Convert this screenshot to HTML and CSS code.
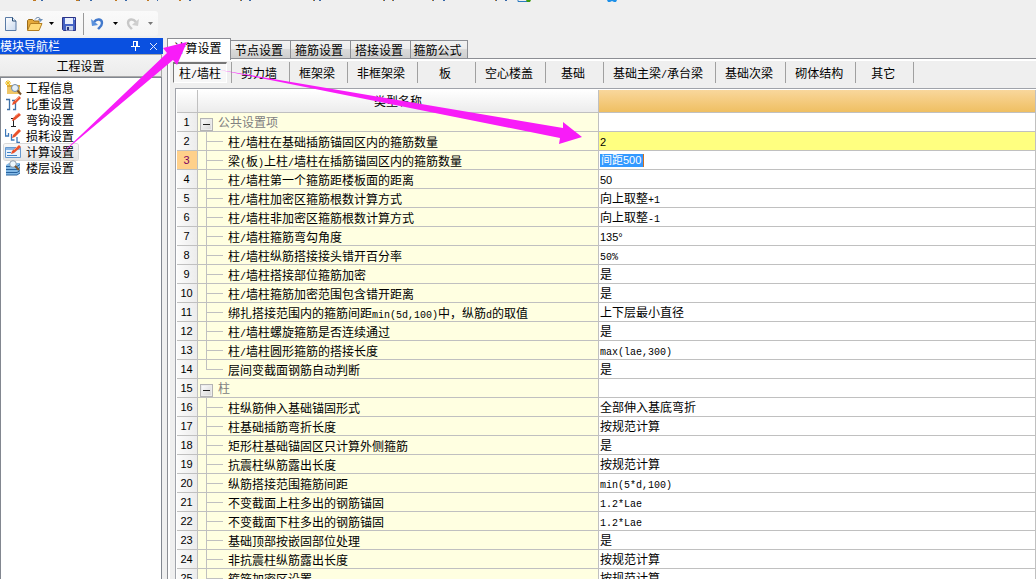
FILE: index.html
```html
<!DOCTYPE html>
<html lang="zh-CN">
<head>
<meta charset="utf-8">
<title>工程设置 - 计算设置</title>
<link rel="stylesheet" href="styles.css">
</head>
<body>
<div class="app">
  <header class="top">
    <svg class="menu-edge" width="640" height="3" aria-hidden="true">
      <path d="M33 0h3M76 0h3M115 0h2M147 0h2M179 0h2M240 0h1M313 0h1M383 0h1M432 0h1M495 0h1M392 0h1" stroke="#c07820" stroke-width="2"/>
      <path d="M41 0h2M79 0h1M90 0h2M125 0h2M157 0h1M189 0h2M241 0h1M249 0h2M314 0h1M319 0h2M384 0h1M393 0h1M433 0h1M443 0h2M496 0h1M505 0h2" stroke="#3868a8" stroke-width="2"/>
      <path d="M518 0v1.500h9" fill="none" stroke="#2a7bc0"/>
      <path d="M526 0h5l-1 2h-3z" fill="#3c9a10"/>
      <path d="M607 0h10l-1 2h-2l-2-1-2 1h-2z" fill="#1e90e8"/>
    </svg>
    <div class="toolbar">
      <button class="tool" aria-label="新建"><svg width="16" height="16"><defs><linearGradient id="pg" x1="0" y1="0" x2="1" y2="1"><stop offset="0" stop-color="#fff"/><stop offset="1" stop-color="#c9d9ef"/></linearGradient></defs><path d="M2.500 1.500h7l3.500 3.500v9.500h-10.500z" fill="url(#pg)" stroke="#5a7ba6"/><path d="M9.500 1.500v3.500h3.500" fill="#e9f2fb" stroke="#24486f"/></svg></button>
      <button class="tool open" aria-label="打开"><svg width="18" height="16"><path d="M1.500 14V4.500l1-1h4l1.500 1.500h5V8" fill="#e4a93a" stroke="#9a6a17"/><path d="M1.500 14.500l3-7h11.500l-3 7z" fill="#ffda76" stroke="#b47e20"/><path d="M9 3.500c2-3 5-2.500 5.500.5" fill="none" stroke="#58779c"/><path d="M12 3h5l-2.500 3z" fill="#6f90b8"/></svg></button>
      <button class="drop" aria-label="打开选项"><svg width="5" height="3"><path d="M0 0h5L2.500 3z"/></svg></button>
      <button class="tool save" aria-label="保存"><svg width="16" height="16"><path d="M1.500 1.500h13v13h-12l-1-1z" fill="#4563c4" stroke="#2c3486"/><path d="M4 2h8v6H4z" fill="#e9effc"/><path d="M5 10h7v4.500H5z" fill="#c6d1e8"/><path d="M6 11h2v3H6z" fill="#29367c"/><path d="M13 2h1v2h-1z" fill="#b8c8ff"/></svg></button>
      <span class="tool-line"></span>
      <button class="tool undo" aria-label="撤销"><svg width="16" height="16"><path d="M4 6c3-4 8-3 8 1 0 3-2 4-4 6" fill="none" stroke="#4279cc" stroke-width="2.400"/><path d="M1 3l1 7 6-1-2-2z" fill="#5a91dc"/></svg></button>
      <button class="drop" aria-label="撤销选项"><svg width="5" height="3"><path d="M0 0h5L2.500 3z"/></svg></button>
      <button class="tool redo" aria-label="恢复" disabled><svg width="16" height="16"><path d="M11 6C8 2 3 3 3 7c0 3 2 4 4 6" fill="none" stroke="#c8c8c8" stroke-width="2.400"/><path d="M14 3l-1 7-6-1 2-2z" fill="#cfcfcf"/></svg></button>
      <button class="drop" aria-label="恢复选项" disabled><svg width="5" height="3"><path d="M0 0h5L2.500 3z" fill="#777"/></svg></button>
    </div>
  </header>

  <main class="work">
    <aside class="dock">
      <div class="dock-title"><h2>模块导航栏</h2>
        <button class="dock-btn" aria-label="固定"><svg width="9" height="10"><path d="M2.500 0v5.500M2 .5h4M5.500 0v5.500M6.500 0v5.500M0 5.500h9M4.500 6v4" fill="none" stroke="#fff"/></svg></button>
        <button class="dock-btn" aria-label="关闭"><svg width="9" height="9"><path d="M1 1l7 7M8 1L1 8" stroke="#e6ecfb"/></svg></button>
      </div>
      <button class="section">工程设置</button>
      <nav class="modules">
        <a href="#info"><svg width="18" height="16"><path d="M2 5h13v9H2z" fill="#d9a436"/><path d="M2 7h13v7H2z" fill="#efc667"/><path d="M3 0v6M0 3h6M1 1l4 4M5 1L1 5" stroke="#edbd20"/><circle cx="10" cy="8" r="3.500" fill="#e5f0fa" stroke="#7088a5"/><path d="M12.500 10.500l3.500 4" stroke="#795229" stroke-width="2"/></svg>工程信息</a>
        <a href="#weight"><svg width="18" height="16"><path d="M1 3.500h3.500v10H2M7 4.500h3.500v9H8" fill="none" stroke="#3e6fa6" stroke-width="1.300"/><path d="M7 9l1-3 6-6 2 2-6 6z" fill="#e9512c"/><path d="M10 5l4-4" stroke="#ff9a76"/></svg>比重设置</a>
        <a href="#hook"><svg width="18" height="16"><path d="M6 6.500h5M8.500 6v8M6 14.500h5" stroke="#222"/><path d="M7 9l1-3 6-5 2 2-6 5z" fill="#e9512c"/><path d="M10 4l4-3" stroke="#ff9a76"/></svg>弯钩设置</a>
        <a href="#loss"><svg width="18" height="16"><path d="M.5 1v7h3V5M6.500 6v6h3M12 9v5.500h3" fill="none" stroke="#3e78b8" stroke-width="1.300"/><path d="M7 10l1-3 6-6 2 2-6 6z" fill="#e9512c"/><path d="M10 5l4-4" stroke="#ff9a76"/></svg>损耗设置</a>
        <a class="current" href="#calc" aria-current="page"><svg width="18" height="16"><path d="M.5 3.500h15v10H.5z" fill="#e9f3fe" stroke="#6799cf"/><path d="M1 4h14v2H1z" fill="#8ab6e5"/><path d="M2 8.500h4M2 11.500h10" stroke="#4382c4"/><path d="M6 10l1-3 7-6 2 2-7 6z" fill="#e9512c"/><path d="M9 6l5-5" stroke="#ff9a76"/></svg>计算设置</a>
        <a href="#floor"><svg width="18" height="16"><path d="M1 5l3-2h11v10l-3 2H1z" fill="#83b9e6"/><path d="M1 6.500h11l3-2M1 9.500h11l3-2M1 12.500h11l3-2M1 15h11l3-2" fill="none" stroke="#27629e"/><circle cx="8" cy="4" r="3.300" fill="#edf7fd" stroke="#8c9aaa"/><path d="M10 6l4 4" stroke="#80572c" stroke-width="2"/></svg>楼层设置</a>
      </nav>
    </aside>

    <section class="content">
      <div class="tabs" role="tablist">
        <button role="tab" aria-selected="true" class="tab active">计算设置</button><button role="tab" class="tab">节点设置</button><button role="tab" class="tab">箍筋设置</button><button role="tab" class="tab">搭接设置</button><button role="tab" class="tab">箍筋公式</button>
      </div>
      <div class="pane">
        <div class="kinds">
          <button class="kind pressed">柱<span class="lat">/</span>墙柱</button><button class="kind">剪力墙</button><button class="kind">框架梁</button><button class="kind">非框架梁</button><button class="kind">板</button><button class="kind">空心楼盖</button><button class="kind">基础</button><button class="kind">基础主梁<span class="lat">/</span>承台梁</button><button class="kind">基础次梁</button><button class="kind">砌体结构</button><button class="kind">其它</button>
        </div>
        <div class="sheet">
          <table>
            <colgroup><col class="c-num"><col class="c-name"><col></colgroup>
            <thead><tr><th></th><th>类型名称</th><th class="hot"></th></tr></thead>
            <tbody>
              <tr class="group"><th>1</th><td><button class="fold" aria-label="折叠"></button>公共设置项</td><td></td></tr>
              <tr class="marked"><th>2</th><td>柱<span class="lat">/</span>墙柱在基础插筋锚固区内的箍筋数量</td><td><span class="num">2</span></td></tr>
              <tr class="editing"><th>3</th><td>梁<span class="lat">(</span>板<span class="lat">)</span>上柱<span class="lat">/</span>墙柱在插筋锚固区内的箍筋数量</td><td><input class="editor" aria-label="箍筋数量" value="间距500"></td></tr>
              <tr><th>4</th><td>柱<span class="lat">/</span>墙柱第一个箍筋距楼板面的距离</td><td><span class="num">50</span></td></tr>
              <tr><th>5</th><td>柱<span class="lat">/</span>墙柱加密区箍筋根数计算方式</td><td>向上取整<span class="lat">+1</span></td></tr>
              <tr><th>6</th><td>柱<span class="lat">/</span>墙柱非加密区箍筋根数计算方式</td><td>向上取整<span class="lat">-1</span></td></tr>
              <tr><th>7</th><td>柱<span class="lat">/</span>墙柱箍筋弯勾角度</td><td><span class="num">135°</span></td></tr>
              <tr><th>8</th><td>柱<span class="lat">/</span>墙柱纵筋搭接接头错开百分率</td><td><span class="lat">50%</span></td></tr>
              <tr><th>9</th><td>柱<span class="lat">/</span>墙柱搭接部位箍筋加密</td><td>是</td></tr>
              <tr><th>10</th><td>柱<span class="lat">/</span>墙柱箍筋加密范围包含错开距离</td><td>是</td></tr>
              <tr><th>11</th><td>绑扎搭接范围内的箍筋间距<span class="lat">min(5d,100)</span>中，纵筋<span class="lat">d</span>的取值</td><td>上下层最小直径</td></tr>
              <tr><th>12</th><td>柱<span class="lat">/</span>墙柱螺旋箍筋是否连续通过</td><td>是</td></tr>
              <tr><th>13</th><td>柱<span class="lat">/</span>墙柱圆形箍筋的搭接长度</td><td><span class="lat">max(lae,300)</span></td></tr>
              <tr class="last"><th>14</th><td>层间变截面钢筋自动判断</td><td>是</td></tr>
              <tr class="group"><th>15</th><td><button class="fold" aria-label="折叠"></button>柱</td><td></td></tr>
              <tr><th>16</th><td>柱纵筋伸入基础锚固形式</td><td>全部伸入基底弯折</td></tr>
              <tr><th>17</th><td>柱基础插筋弯折长度</td><td>按规范计算</td></tr>
              <tr><th>18</th><td>矩形柱基础锚固区只计算外侧箍筋</td><td>是</td></tr>
              <tr><th>19</th><td>抗震柱纵筋露出长度</td><td>按规范计算</td></tr>
              <tr><th>20</th><td>纵筋搭接范围箍筋间距</td><td><span class="lat">min(5*d,100)</span></td></tr>
              <tr><th>21</th><td>不变截面上柱多出的钢筋锚固</td><td><span class="lat">1.2*Lae</span></td></tr>
              <tr><th>22</th><td>不变截面下柱多出的钢筋锚固</td><td><span class="lat">1.2*Lae</span></td></tr>
              <tr><th>23</th><td>基础顶部按嵌固部位处理</td><td>是</td></tr>
              <tr><th>24</th><td>非抗震柱纵筋露出长度</td><td>按规范计算</td></tr>
              <tr><th>25</th><td>箍筋加密区设置</td><td>按规范计算</td></tr>
            </tbody>
          </table>
        </div>
      </div>
    </section>
  </main>

  <svg class="arrows" width="600" height="170" aria-hidden="true">
    <path d="M61 154L167 53 163 48 187 42 177 65 173 60z"/>
    <path d="M220 70L563 128V122L582 137 559 144 560 138z"/>
  </svg>
</div>
</body>
</html>
```
FILE: styles.css
```css
* { box-sizing: border-box; }

body {
  margin: 0;
  background: #efefef;
  color: #000;
  font: 12px/16px "Noto Sans CJK SC", sans-serif;
}

button, input {
  margin: 0;
  padding: 0;
  border: 0;
  background: none;
  color: inherit;
  font: inherit;
}

svg { display: block; flex: none; }

.app {
  position: relative;
  display: flex;
  flex-direction: column;
  height: 100vh;
  overflow: hidden;
}

.lat { font: 10px/10px "Liberation Mono", monospace; }
.num { font: 11px/10px "Liberation Sans", sans-serif; }

/* toolbar */
.top { flex: none; height: 38px; }
.menu-edge { height: 11px; }

.toolbar {
  display: flex;
  align-items: center;
  width: 158px;
  height: 25px;
  padding-left: 3px;
  border-radius: 0 3px 3px 0;
  background: linear-gradient(#fafafa, #f4f4f4);
}

.tool.open { margin-left: 7px; }
.drop { margin-left: 5px; }
.tool.save { margin-left: 7px; }
.tool-line { width: 1px; height: 22px; margin: 0 6px 0 6px; background: #9a9a9a; }
.tool.undo + .drop { margin-left: 7px; }
.tool.redo { margin-left: 7px; }
.tool.redo + .drop { margin-left: 7px; }

.work { display: flex; flex: 1; min-height: 0; }

/* navigation dock */
.dock {
  display: flex;
  flex: none;
  flex-direction: column;
  width: 163px;
}

.dock-title {
  display: flex;
  align-items: center;
  gap: 9px;
  height: 16px;
  padding-right: 5px;
  background: #0a50e0;
  color: #fff;
}

.dock-title h2 { flex: 1; margin: 0; font-size: 12px; font-weight: 400; line-height: 14px; }

.section {
  height: 23px;
  margin-right: 1px;
  border: 1px solid #a8a8a8;
  border-left: 0;
  background: linear-gradient(#f4f4f4, #ebebeb);
}

.modules {
  display: flex;
  flex: 1;
  flex-direction: column;
  align-items: flex-start;
  margin-right: 1px;
  padding: 2px 0 0 3px;
  border: 1px solid #828790;
  border-bottom: 0;
  background: #fff;
}

.modules a {
  display: flex;
  align-items: center;
  gap: 3px;
  height: 16px;
  padding: 0 4px 0 1px;
  color: #000;
  text-decoration: none;
}

.modules .current {
  border-radius: 2px;
  background: linear-gradient(#f8f8f8, #e5e5e5);
  box-shadow: 0 0 0 1px #d9d9d9;
}

/* tabs */
.content {
  display: flex;
  flex: 1;
  flex-direction: column;
  min-width: 0;
  margin-left: 4px;
}

.tabs {
  display: flex;
  align-items: flex-end;
  height: 20px;
}

.tab {
  width: 60px;
  height: 18px;
  padding-right: 3px;
  border: 1px solid #8c8e94;
  border-left-width: 0;
  border-bottom: 0;
  background: linear-gradient(#f2f2f2, #ebebeb 50%, #dadada 50%, #cfcfcf);
  line-height: 16px;
}

.tab:last-child { width: 57px; }

.tab.active {
  position: relative;
  width: 64px;
  height: 22px;
  margin-bottom: -2px;
  padding-bottom: 3px;
  border-left-width: 1px;
  background: #fff;
}

.pane {
  display: flex;
  flex: 1;
  flex-direction: column;
  min-height: 0;
  padding: 2px 0 0 4px;
  border: 1px solid #8c8e94;
  border-width: 1px 0 0 1px;
  background: #efefef;
  box-shadow: inset 2px 2px #fff;
}

.kinds { display: flex; height: 27px; padding-top: 1px; }

.kind {
  min-width: 58px;
  height: 21px;
  padding: 0 12px 0 9px;
  border-right: 1px solid #a0a0a0;
  line-height: 20px;
}

.kind.pressed {
  min-width: 54px;
  margin: 0 4px 0 1px;
  padding: 0 4px;
  border: 1px solid #fff;
  border-top: 2px solid #777;
  border-left-color: #777;
  background: #f7f7f7;
  line-height: 18px;
}

.kind.pressed + .kind { min-width: 59px; border-left: 1px solid #a0a0a0; }

/* settings grid */
.sheet {
  flex: 1;
  min-height: 0;
  margin-left: 3px;
  padding: 1px 0 0 1px;
  border: 1px solid #a0a3aa;
  border-width: 1px 0 0 1px;
  background: #fff;
  overflow: hidden;
}

table {
  width: 100%;
  border-spacing: 0;
  table-layout: fixed;
}

.c-num { width: 21px; }
.c-name { width: 401px; }

th, td {
  height: 19px;
  padding: 0 0 0 1px;
  border: solid #c0c0c0;
  border-width: 0 1px 1px 0;
  line-height: 16px;
  text-align: left;
  font-weight: 400;
  white-space: nowrap;
}

thead th {
  height: 23px;
  padding: 0;
  background: linear-gradient(#fff, #ececec);
  text-align: center;
}

thead .hot { background: linear-gradient(#f9d79c, #efbf62); }

tbody th {
  padding: 0 1px 0 0;
  background: linear-gradient(90deg, #fbfbfb, #ececec);
  font: 11px/16px "Liberation Sans", sans-serif;
  text-align: center;
}

tbody td:nth-child(2) {
  padding: 1px 0 0 30px;
  background:
    linear-gradient(#c0c0c0, #c0c0c0) 8px 0 / 1px 100% no-repeat,
    linear-gradient(#c0c0c0, #c0c0c0) 8px 9px / 17px 1px no-repeat,
    #ffffe1;
}

tbody .last td:nth-child(2) {
  background:
    linear-gradient(#c0c0c0, #c0c0c0) 8px 0 / 1px 10px no-repeat,
    linear-gradient(#c0c0c0, #c0c0c0) 8px 9px / 17px 1px no-repeat,
    #ffffe1;
}

tbody .group td:nth-child(2) {
  padding-left: 2px;
  background: #ffffe1;
  color: #808080;
}

.fold {
  width: 13px;
  height: 13px;
  margin-right: 5px;
  border: 1px solid #b4b4b4;
  background:
    linear-gradient(#222, #222) center / 7px 1px no-repeat,
    linear-gradient(135deg, #fff, #d4d4d4);
  box-shadow: inset 0 0 0 1px #ececec;
  vertical-align: -3px;
}

.marked td:last-child { background: #ffff80; }
.editing th { background: #ffd08a; color: #800060; }

.editor {
  display: block;
  width: 44px;
  height: 13px;
  padding-left: 1px;
  border-right: 1px solid #d07020;
  background: #3399ff;
  color: #fff;
  font: 11px/13px "Liberation Sans", "Noto Sans CJK SC", sans-serif;
}

/* callout arrows */
.arrows {
  position: absolute;
  top: 0;
  left: 0;
  fill: #f81cf8;
  pointer-events: none;
}
```
